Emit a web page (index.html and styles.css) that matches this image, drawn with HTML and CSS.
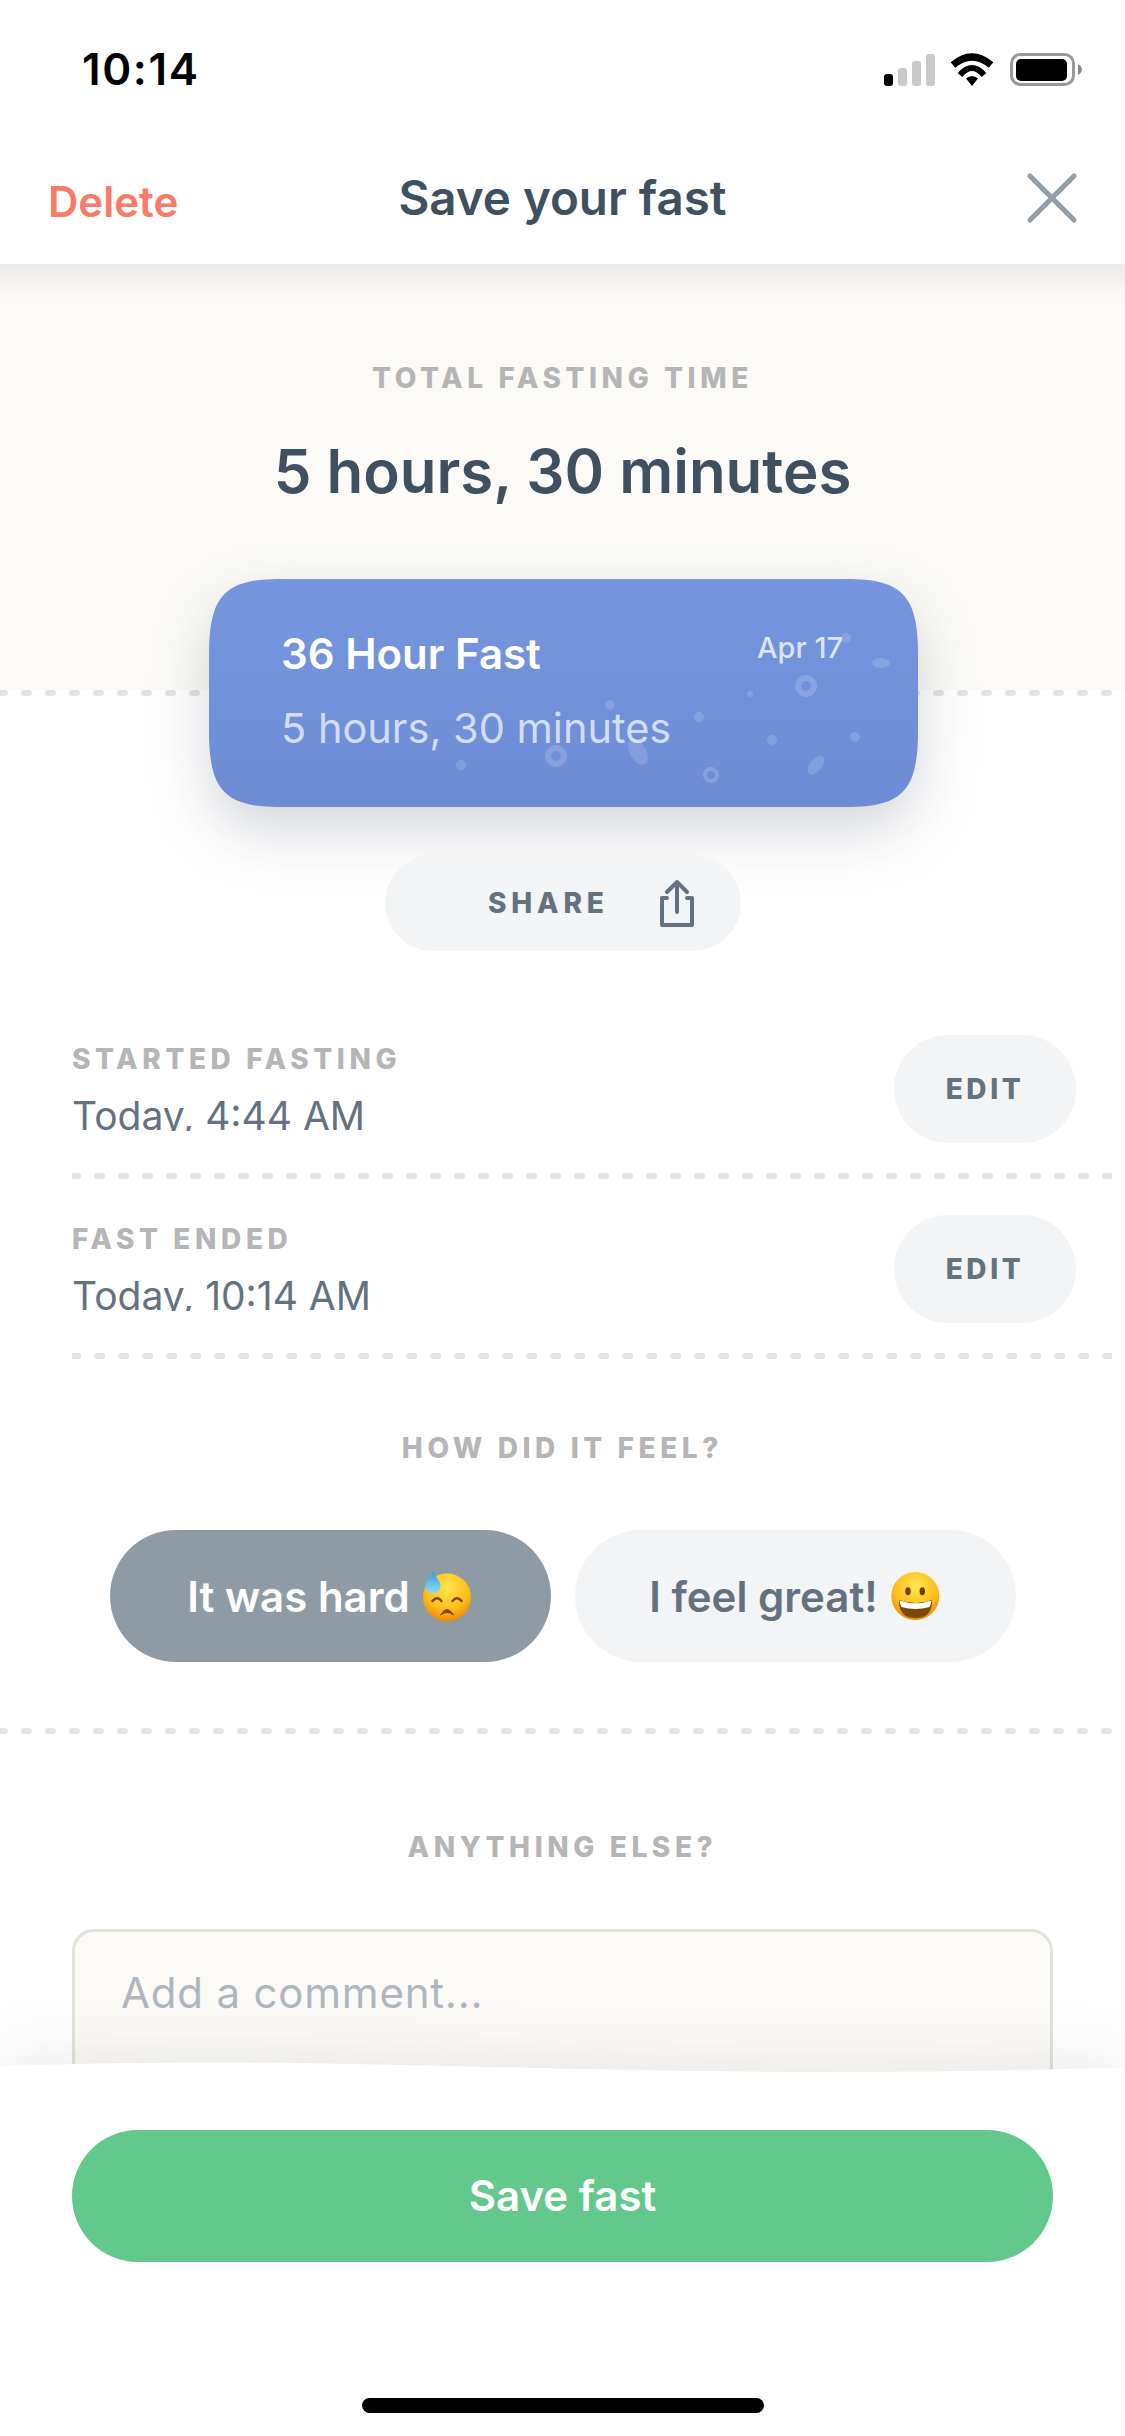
FILE: index.html
```html
<!DOCTYPE html>
<html lang="en">
<head>
  <meta charset="UTF-8">
  <meta name="viewport" content="width=device-width, initial-scale=1.0">
  <title>Save your fast</title>
  <link rel="stylesheet" href="styles.css">
</head>
<body>
  <div class="screen">
    <div class="status">
      <span class="time">10:14</span>
      <div class="status-icons">
        <svg class="signal" width="51" height="33" viewBox="0 0 51 33">
          <rect x="0" y="21" width="9" height="12" rx="3" fill="#000"/>
          <rect x="14" y="15" width="9" height="18" rx="3" fill="#c9c9c9"/>
          <rect x="28" y="8" width="9" height="25" rx="3" fill="#c9c9c9"/>
          <rect x="42" y="1" width="9" height="32" rx="3" fill="#c9c9c9"/>
        </svg>
        <svg class="wifi" width="45" height="33" viewBox="0 0 45 33">
          <path d="M22 33 L16 25.500 Q22 20.500 28 25.500 Z" fill="#000"/>
          <path d="M10 22 Q22 8 34 22" fill="none" stroke="#000" stroke-width="6"/>
          <path d="M3 12 Q22 -4 41 12" fill="none" stroke="#000" stroke-width="7"/>
        </svg>
        <svg class="battery" width="72" height="33" viewBox="0 0 72 33">
          <rect x="1.500" y="1.500" width="62" height="30" rx="9" fill="none" stroke="#999" stroke-width="3"/>
          <rect x="6" y="6" width="51" height="22" rx="5" fill="#000"/>
          <path d="M68 11 C70 12 72 14 72 16.500 C72 19 70 21 68 22 Z" fill="#888"/>
        </svg>
      </div>
    </div>

    <div class="nav">
      <span class="delete">Delete</span>
      <h1>Save your fast</h1>
      <svg class="close" width="50" height="50" viewBox="0 0 50 50">
        <path d="M3 3 L47 47 M47 3 L3 47" fill="none" stroke="#929da6" stroke-width="5" stroke-linecap="round"/>
      </svg>
    </div>

    <div class="summary">
      <div class="label center">TOTAL FASTING TIME</div>
      <div class="total">5 hours, 30 minutes</div>
    </div>
    <svg class="dots"><line class="dot-line" x1="0" y1="3" x2="1125" y2="3"/></svg>

    <div class="card">
      <svg class="card-bg" width="709" height="228" viewBox="0 0 709 228">
        <defs>
          <linearGradient id="cardFill" x1="0" y1="0" x2="0" y2="1">
            <stop offset="0" stop-color="#7596df"/>
            <stop offset="1" stop-color="#6d8cd5"/>
          </linearGradient>
        </defs>
        <path d="M72 0 H637 C693 0 709 16 709 76 V152 C709 212 693 228 637 228 H72 C16 228 0 212 0 152 V76 C0 16 16 0 72 0 Z" fill="url(#cardFill)"/>
        <g fill="#fff" fill-opacity="0.15">
          <circle cx="637" cy="59" r="5"/>
          <ellipse cx="672" cy="84" rx="9" ry="5"/>
          <circle cx="541" cy="115" r="3"/>
          <circle cx="401" cy="126" r="5"/>
          <circle cx="490" cy="138" r="5"/>
          <circle cx="563" cy="161" r="5"/>
          <circle cx="646" cy="158" r="5"/>
          <circle cx="252" cy="186" r="5"/>
          <ellipse cx="429" cy="173" rx="8" ry="14" transform="rotate(-30 429 173)"/>
          <ellipse cx="607" cy="186" rx="6" ry="11" transform="rotate(40 607 186)"/>
        </g>
        <g fill="none" stroke="#fff" stroke-opacity="0.17">
          <circle cx="597" cy="107" r="8" stroke-width="6"/>
          <circle cx="347" cy="177" r="8" stroke-width="6"/>
          <circle cx="502" cy="196" r="6" stroke-width="4"/>
        </g>
      </svg>
      <div class="card-top">
        <span class="card-title">36 Hour Fast</span>
        <span class="card-date">Apr 17</span>
      </div>
      <div class="card-sub">5 hours, 30 minutes</div>
    </div>

    <div class="share">
      <span class="share-text">SHARE</span>
      <svg width="36" height="48" viewBox="0 0 36 48">
        <path d="M8 19 H3 V46 H33 V19 H28 M18 33 V3 M8 13 L18 3 L28 13" fill="none" stroke="#64727f" stroke-width="4" stroke-linecap="round" stroke-linejoin="round"/>
      </svg>
    </div>

    <div class="rows">
      <div class="row">
        <div class="row-info">
          <div class="label">STARTED FASTING</div>
          <div class="row-value">Today, 4:44 AM</div>
        </div>
        <div class="edit">EDIT</div>
      </div>
      <svg class="dots dots-row"><line class="dot-line" x1="0" y1="3" x2="1040" y2="3"/></svg>
      <div class="row">
        <div class="row-info">
          <div class="label">FAST ENDED</div>
          <div class="row-value">Today, 10:14 AM</div>
        </div>
        <div class="edit">EDIT</div>
      </div>
      <svg class="dots dots-row"><line class="dot-line" x1="0" y1="3" x2="1040" y2="3"/></svg>
    </div>

    <div class="label center feel-label">HOW DID IT FEEL?</div>
    <div class="feel">
      <div class="feel-btn active">
        It was hard
        <svg class="emoji" width="50" height="52" viewBox="0 0 50 52">
          <defs>
            <radialGradient id="face1" cx="50%" cy="30%" r="70%">
              <stop offset="0" stop-color="#ffe54f"/>
              <stop offset="0.65" stop-color="#fdbd1a"/>
              <stop offset="1" stop-color="#ee8a00"/>
            </radialGradient>
            <linearGradient id="drop" x1="0" y1="0" x2="0" y2="1">
              <stop offset="0" stop-color="#2f9be0"/>
              <stop offset="1" stop-color="#8fdcf8"/>
            </linearGradient>
          </defs>
          <circle cx="24" cy="27.300" r="24" fill="url(#face1)"/>
          <path d="M9.500 31 Q14 25.500 18.500 31 M29.500 31 Q34 25.500 38.500 31" fill="none" stroke="#7a4a05" stroke-width="2.500" stroke-linecap="round"/>
          <path d="M17.500 45 Q24 34 30.500 45 Q24 40 17.500 45 Z" fill="#7a4a05" stroke="#7a4a05" stroke-width="1" stroke-linejoin="round"/>
          <path d="M10 0.700 C11.500 7 17.500 10 17.500 16 A7.500 7.500 0 0 1 2.500 16 C2.500 10 8.500 7 10 0.700 Z" fill="url(#drop)"/>
        </svg>
      </div>
      <div class="feel-btn">
        I feel great!
        <svg class="emoji" width="50" height="50" viewBox="0 0 50 50">
          <defs>
            <radialGradient id="face2" cx="50%" cy="30%" r="70%">
              <stop offset="0" stop-color="#ffe54f"/>
              <stop offset="0.65" stop-color="#fdbd1a"/>
              <stop offset="1" stop-color="#ee8a00"/>
            </radialGradient>
          </defs>
          <circle cx="24.300" cy="25" r="24" fill="url(#face2)"/>
          <ellipse cx="17" cy="20.300" rx="2.700" ry="4" fill="#6b3f05"/>
          <ellipse cx="31.300" cy="20.300" rx="2.700" ry="4" fill="#6b3f05"/>
          <path d="M8 29 Q24.500 35 41 29 Q41.500 47 24.500 47 Q7.500 47 8 29 Z" fill="#7a4a05"/>
          <path d="M8.500 29.500 Q24.500 35 40.500 29.500 Q40 34 38.500 36 Q24.500 40 10.500 36 Q9 34 8.500 29.500 Z" fill="#fff"/>
        </svg>
      </div>
    </div>
    <svg class="dots"><line class="dot-line" x1="0" y1="3" x2="1125" y2="3"/></svg>

    <div class="label center else-label">ANYTHING ELSE?</div>
    <div class="comment">Add a comment...</div>

    <div class="footer">
      <svg class="wave" width="1125" height="90" viewBox="0 0 1125 90">
        <path d="M0 14 C120 10 220 10 300 11 C480 14 650 20 830 20 C950 20 1050 18 1125 15 V90 H0 Z" fill="#fff"/>
      </svg>
      <div class="footer-body">
        <div class="save">Save fast</div>
        <div class="home-bar"></div>
      </div>
    </div>
  </div>
</body>
</html>
```

FILE: styles.css
```css
* {
  box-sizing: border-box;
}
body {
  margin: 0;
  background-color: #fff;
  font-family: 'Inter', sans-serif;
  color: #64727f;
}
.screen {
  position: relative;
  width: 1125px;
  height: 2436px;
  overflow: hidden;
  background-color: #fff;
}

/* status bar */
.status {
  display: flex;
  justify-content: space-between;
  align-items: center;
  height: 132px;
  padding: 6px 43px 0 82px;
}
.time {
  font-size: 44px;
  font-weight: 600;
  color: #000;
  letter-spacing: 1.600px;
}
.status-icons {
  display: flex;
  align-items: center;
  gap: 15px;
}

/* nav */
.nav {
  position: relative;
  display: flex;
  justify-content: space-between;
  align-items: center;
  height: 132px;
  padding: 0 48px;
}
.delete {
  margin-top: 6px;
  font-size: 42px;
  font-weight: 600;
  color: #fb7a66;
}
.nav h1 {
  position: absolute;
  left: 0;
  right: 0;
  top: 38px;
  margin: 0;
  text-align: center;
  font-size: 47.500px;
  line-height: 56px;
  font-weight: 600;
  color: #3f5060;
}

/* summary */
.summary {
  height: 426px;
  padding-top: 97px;
  background: linear-gradient(#ecebe9 0, #f8f7f3 30px, #fbfaf6 42px);
}
.label {
  font-size: 28px;
  line-height: 34px;
  font-weight: 800;
  letter-spacing: 4.600px;
  color: #b5b5b5;
}
.center {
  text-align: center;
}
.total {
  margin-top: 43px;
  text-align: center;
  font-size: 60px;
  line-height: 66px;
  font-weight: 600;
  color: #3f5060;
}
.dots {
  display: block;
  width: 1125px;
  height: 6px;
}
.dots-row {
  width: 1040px;
  margin: 30px 0 36px;
}
.dot-line {
  stroke: #e3e3e3;
  stroke-width: 6;
  stroke-linecap: round;
  stroke-dasharray: 5 19;
}
.dots-row .dot-line {
  stroke-dashoffset: -1;
}

/* card */
.card {
  position: relative;
  width: 709px;
  height: 228px;
  margin: -117px 0 0 209px;
  padding: 51px 75px 0 72px;
}
.card-bg {
  position: absolute;
  left: 0;
  top: 0;
  filter: drop-shadow(0 24px 30px rgba(40, 50, 70, 0.2));
}
.card-top {
  position: relative;
  display: flex;
  justify-content: space-between;
  align-items: flex-start;
}
.card-title {
  font-size: 42px;
  line-height: 48px;
  font-weight: 600;
  color: #fff;
}
.card-date {
  font-size: 29px;
  line-height: 36px;
  font-weight: 500;
  color: rgba(255, 255, 255, 0.75);
}
.card-sub {
  position: relative;
  margin-top: 26px;
  font-size: 41.500px;
  line-height: 48px;
  color: rgba(255, 255, 255, 0.7);
}

/* share */
.share {
  position: relative;
  display: flex;
  align-items: center;
  gap: 50px;
  width: 356px;
  height: 96px;
  margin: 48px 0 0 385px;
  padding-left: 103px;
  border-radius: 48px;
  background-color: #f3f4f6;
}
.share-text {
  font-size: 28px;
  font-weight: 800;
  letter-spacing: 4.800px;
}

/* rows */
.rows {
  position: relative;
  margin-top: 84px;
  padding-left: 72px;
}
.row {
  display: flex;
  justify-content: space-between;
  height: 108px;
}
.row-info {
  padding-top: 7px;
}
.row-value {
  height: 35px;
  margin-top: 20px;
  overflow: hidden;
  font-size: 39px;
  line-height: 40px;
}
.edit {
  width: 182px;
  height: 108px;
  margin-right: 49px;
  border-radius: 54px;
  background-color: #f3f4f6;
  text-align: center;
  font-size: 28px;
  line-height: 108px;
  font-weight: 800;
  letter-spacing: 3.600px;
}

/* feel */
.feel-label {
  margin-top: 72px;
}
.feel {
  display: flex;
  justify-content: center;
  gap: 24px;
  margin: 65px 0 66px;
}
.feel-btn {
  display: flex;
  justify-content: center;
  align-items: center;
  gap: 13px;
  width: 441px;
  height: 132px;
  border-radius: 66px;
  background-color: #f3f4f6;
  font-size: 42px;
  font-weight: 600;
}
.feel-btn.active {
  background-color: #8f9ba4;
  color: #fff;
}

/* comment */
.else-label {
  margin-top: 96px;
}
.comment {
  height: 200px;
  margin: 65px 72px 0;
  padding: 37px 46px;
  border: 3px solid #e2e2dd;
  border-radius: 22px;
  background-color: #fbfaf6;
  font-size: 42px;
  line-height: 48px;
  letter-spacing: 0.800px;
  color: #aeb7bf;
}

/* bottom sheet over the content */
.footer {
  position: absolute;
  left: 0;
  right: 0;
  top: 2052px;
  bottom: 0;
}
.wave {
  display: block;
  filter: drop-shadow(0 -8px 30px rgba(30, 30, 30, 0.09));
}
.footer-body {
  position: absolute;
  left: 0;
  right: 0;
  top: 78px;
  bottom: 0;
  background-color: #fff;
}
.save {
  height: 132px;
  margin: 0 72px;
  border-radius: 66px;
  background-color: #63c88c;
  text-align: center;
  font-size: 42px;
  line-height: 132px;
  font-weight: 600;
  color: #fff;
}
.home-bar {
  width: 402px;
  height: 15px;
  margin: 136px auto 0;
  border-radius: 8px;
  background-color: #000;
}
```
